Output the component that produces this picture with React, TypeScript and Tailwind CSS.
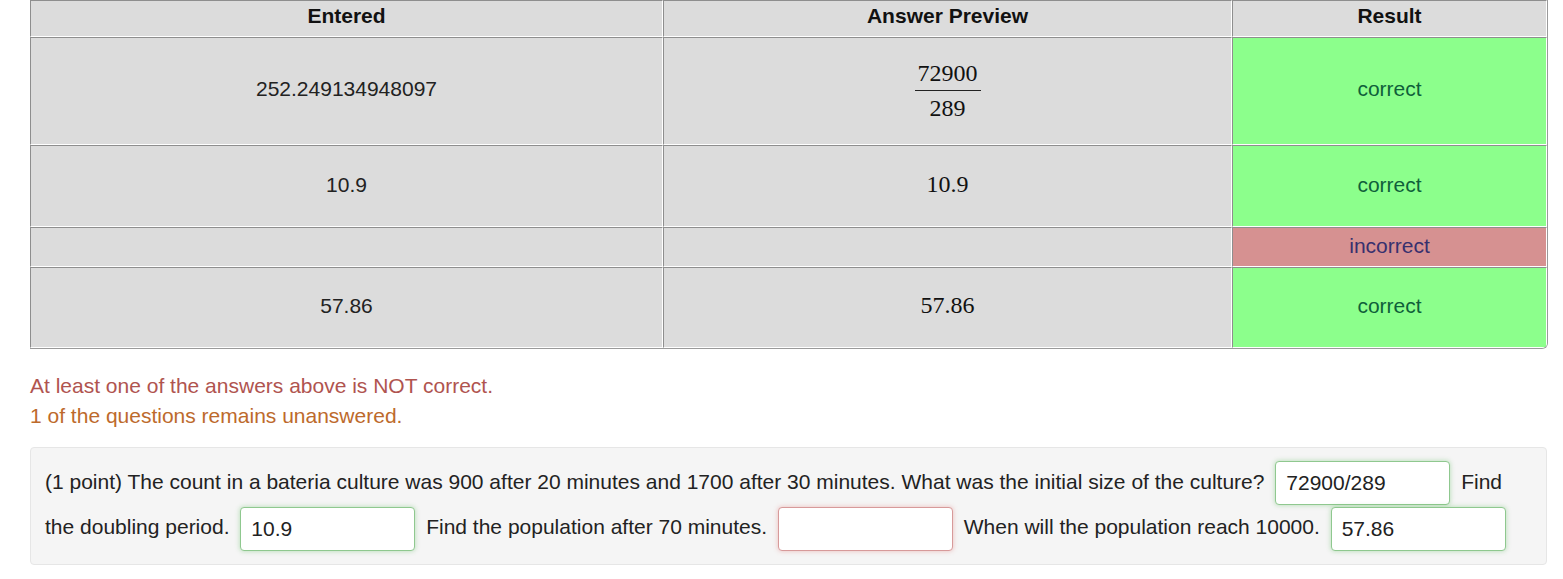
import React from "react";

const sans = { fontFamily: '"Liberation Sans", Arial, sans-serif' };

function Cell({ w, h, children, bg = "bg-[#dcdcdc]", extra = "" }: { w: string; h: string; children?: React.ReactNode; bg?: string; extra?: string }) {
  return (
    <div className={`${w} ${h} ${bg} ${extra} flex items-center justify-center border-t border-l border-t-[#8e8e8e] border-l-[#8e8e8e] border-r border-b border-r-white border-b-white`}>
      {children}
    </div>
  );
}

function Frac({ n, d }: { n: string; d: string }) {
  return (
    <div className="flex flex-col items-center text-[24px] leading-[28px] text-[#111]" style={{ fontFamily: '"Liberation Serif", "Times New Roman", serif' }}>
      <div className="px-[2px] pb-[3px]">{n}</div>
      <div className="w-[66px] border-t border-[#222]" />
      <div className="pt-[3px]">{d}</div>
    </div>
  );
}

const serif = { fontFamily: '"Liberation Serif", "Times New Roman", serif' };

const inputBase = "mx-[5px] h-[44px] w-[175px] rounded-[4px] border bg-white px-[10px] align-middle text-[21px] leading-[24px] text-[#222] outline-none";
const okInput = "border-[#8fc88f] shadow-[0_0_5px_rgba(92,184,92,0.45)]";
const badInput = "border-[#d79a9a] shadow-[0_0_5px_rgba(217,83,79,0.35)]";

export default function App() {
  const c1 = "w-[633px]";
  const c2 = "w-[569px]";
  const c3 = "w-[315px]";
  const green = "bg-[#8cff8c]";
  const red = "bg-[#d69191]";
  const ok = <span className="text-[#0f5f3a]">correct</span>;
  return (
    <div className="min-h-[579px] bg-white pl-[30px] pr-[15px] text-[21px] text-[#222]" style={sans}>
      <div className="w-[1518px] border-r border-b border-r-[#9a9a9a] border-b-[#9a9a9a] rounded-br-[6px] overflow-hidden">
        <div className="flex font-bold text-[#111]">
          <Cell w={c1} h="h-[37px]" extra="pb-[5px]">Entered</Cell>
          <Cell w={c2} h="h-[37px]" extra="pb-[5px]">Answer Preview</Cell>
          <Cell w={c3} h="h-[37px]" extra="pb-[5px]">Result</Cell>
        </div>
        <div className="flex">
          <Cell w={c1} h="h-[108px]" extra="pb-[4px]">252.249134948097</Cell>
          <Cell w={c2} h="h-[108px]" extra="pb-[1px]"><Frac n="72900" d="289" /></Cell>
          <Cell w={c3} h="h-[108px]" bg={green} extra="pb-[4px]">{ok}</Cell>
        </div>
        <div className="flex">
          <Cell w={c1} h="h-[82px]" extra="pb-[3px]">10.9</Cell>
          <Cell w={c2} h="h-[82px]" extra="pb-[5px]"><span className="text-[24px] text-[#111]" style={serif}>10.9</span></Cell>
          <Cell w={c3} h="h-[82px]" bg={green} extra="pb-[3px]">{ok}</Cell>
        </div>
        <div className="flex">
          <Cell w={c1} h="h-[40px]" />
          <Cell w={c2} h="h-[40px]" />
          <Cell w={c3} h="h-[40px]" bg={red} extra="pb-[2px]"><span className="text-[#37306e]">incorrect</span></Cell>
        </div>
        <div className="flex">
          <Cell w={c1} h="h-[81px]" extra="pb-[3px]">57.86</Cell>
          <Cell w={c2} h="h-[81px]" extra="pb-[5px]"><span className="text-[24px] text-[#111]" style={serif}>57.86</span></Cell>
          <Cell w={c3} h="h-[81px]" bg={green} extra="pb-[3px]">{ok}</Cell>
        </div>
      </div>

      <div className="mt-[22px] leading-[30px]">
        <div className="text-[#b0544f]">At least one of the answers above is NOT correct.</div>
        <div className="text-[#bd6a2c]">1 of the questions remains unanswered.</div>
      </div>

      <div className="mt-[16px] w-[1517px] rounded-[4px] border border-[#e6e6e6] bg-[#f5f5f5] pl-[14px] pr-[12px] pt-[12px] pb-[13px] leading-[43px] text-[#222]">
        (1 point) The count in a bateria culture was 900 after 20 minutes and 1700 after 30 minutes. What was the initial size of the culture?{" "}
        <input readOnly value="72900/289" className={`${inputBase} ${okInput}`} style={sans} />{" "}
        Find the doubling period.{" "}
        <input readOnly value="10.9" className={`${inputBase} ${okInput}`} style={sans} />{" "}
        Find the population after 70 minutes.{" "}
        <input readOnly value="" className={`${inputBase} ${badInput}`} style={sans} />{" "}
        When will the population reach 10000.{" "}
        <input readOnly value="57.86" className={`${inputBase} ${okInput}`} style={sans} />
      </div>
    </div>
  );
}
